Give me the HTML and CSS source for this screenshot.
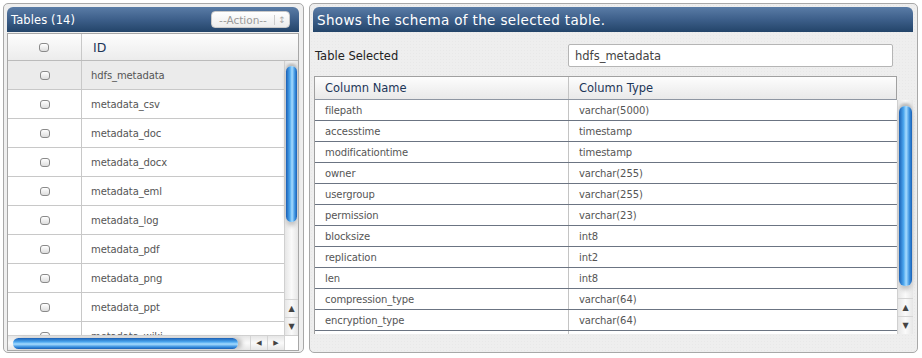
FILE: index.html
```html
<!DOCTYPE html>
<html lang="en">
<head>
  <meta charset="UTF-8">
  <title>Table Schema</title>
  <link rel="stylesheet" href="styles.css">
</head>
<body>
  <div class="page">
    <div class="panel tables-panel">
      <div class="bar">
        <span class="bar-title">Tables (14)</span>
        <div class="action">
          <span class="action-label">--Action--</span>
          <span class="action-arrows">&#8597;</span>
        </div>
      </div>
      <div class="grid">
        <div class="grid-head">
          <div class="cell check"><input type="checkbox" class="cb"></div>
          <div class="cell id">ID</div>
        </div>
        <div class="grid-main">
          <div class="grid-rows">
            <div class="grid-row selected"><div class="cell check"><input type="checkbox" class="cb"></div><div class="cell name">hdfs_metadata</div></div>
            <div class="grid-row"><div class="cell check"><input type="checkbox" class="cb"></div><div class="cell name">metadata_csv</div></div>
            <div class="grid-row"><div class="cell check"><input type="checkbox" class="cb"></div><div class="cell name">metadata_doc</div></div>
            <div class="grid-row"><div class="cell check"><input type="checkbox" class="cb"></div><div class="cell name">metadata_docx</div></div>
            <div class="grid-row"><div class="cell check"><input type="checkbox" class="cb"></div><div class="cell name">metadata_eml</div></div>
            <div class="grid-row"><div class="cell check"><input type="checkbox" class="cb"></div><div class="cell name">metadata_log</div></div>
            <div class="grid-row"><div class="cell check"><input type="checkbox" class="cb"></div><div class="cell name">metadata_pdf</div></div>
            <div class="grid-row"><div class="cell check"><input type="checkbox" class="cb"></div><div class="cell name">metadata_png</div></div>
            <div class="grid-row"><div class="cell check"><input type="checkbox" class="cb"></div><div class="cell name">metadata_ppt</div></div>
            <div class="grid-row"><div class="cell check"><input type="checkbox" class="cb"></div><div class="cell name">metadata_wiki</div></div>
          </div>
          <div class="vscroll">
            <div class="vthumb"></div>
            <div class="vtrack"></div>
            <div class="arrow">&#9650;</div>
            <div class="arrow">&#9660;</div>
          </div>
        </div>
        <div class="hscroll">
          <div class="htrack">
            <div class="hthumb"></div>
          </div>
          <div class="harrow">&#9664;</div>
          <div class="harrow">&#9654;</div>
          <div class="corner"></div>
        </div>
      </div>
    </div>

    <div class="panel schema-panel">
      <div class="bar">
        <span class="bar-title wide">Shows the schema of the selected table.</span>
      </div>
      <div class="selected-row">
        <label class="selected-label">Table Selected</label>
        <input class="selected-input" type="text" value="hdfs_metadata">
      </div>
      <div class="schema">
        <div class="schema-head">
          <div class="scell first">Column Name</div>
          <div class="scell">Column Type</div>
        </div>
        <div class="schema-main">
          <div class="schema-rows">
            <div class="srow"><div class="scell first">filepath</div><div class="scell">varchar(5000)</div></div>
            <div class="srow"><div class="scell first">accesstime</div><div class="scell">timestamp</div></div>
            <div class="srow"><div class="scell first">modificationtime</div><div class="scell">timestamp</div></div>
            <div class="srow"><div class="scell first">owner</div><div class="scell">varchar(255)</div></div>
            <div class="srow"><div class="scell first">usergroup</div><div class="scell">varchar(255)</div></div>
            <div class="srow"><div class="scell first">permission</div><div class="scell">varchar(23)</div></div>
            <div class="srow"><div class="scell first">blocksize</div><div class="scell">int8</div></div>
            <div class="srow"><div class="scell first">replication</div><div class="scell">int2</div></div>
            <div class="srow"><div class="scell first">len</div><div class="scell">int8</div></div>
            <div class="srow"><div class="scell first">compression_type</div><div class="scell">varchar(64)</div></div>
            <div class="srow"><div class="scell first">encryption_type</div><div class="scell">varchar(64)</div></div>
            <div class="srow"><div class="scell first">&nbsp;</div><div class="scell">&nbsp;</div></div>
          </div>
          <div class="vscroll wide">
            <div class="vthumb"></div>
            <div class="vtrack"></div>
            <div class="arrow">&#9650;</div>
            <div class="arrow">&#9660;</div>
          </div>
        </div>
      </div>
    </div>
  </div>
</body>
</html>
```

FILE: styles.css
```css
body {
  margin: 0;
  background: #fff;
  font-family: 'DejaVu Sans', 'Liberation Sans', sans-serif;
  color: #444;
}
.page {
  display: flex;
  gap: 5px;
  padding: 3px 4px 0 3px;
}
.panel {
  box-sizing: border-box;
  height: 350px;
  border: 1px solid #a8a8a8;
  border-radius: 5px;
  background: #efefef;
  padding: 3px 4px 0 3px;
}
.tables-panel {
  width: 301px;
}
.schema-panel {
  flex: 1;
  background-color: #eeeeee;
  background-image: radial-gradient(rgba(0,0,0,0.025) 1px, transparent 1px);
  background-size: 3px 3px;
}
.bar {
  height: 25px;
  display: flex;
  align-items: center;
  justify-content: space-between;
  padding: 0 9px 0 4px;
  border-radius: 6px 6px 0 0;
  background: linear-gradient(#5a7ca6, #3d5f8a 50%, #234469);
  color: #fff;
}
.bar-title {
  font-size: 11.5px;
  letter-spacing: 0.1px;
}
.bar-title.wide {
  font-size: 13.5px;
  letter-spacing: 0.35px;
}
.action {
  display: flex;
  align-items: center;
  height: 17px;
  width: 79px;
  box-sizing: border-box;
  border: 1px solid #c9c9c9;
  border-radius: 4px;
  background: linear-gradient(#ffffff, #ececec);
  color: #999;
  font-size: 10.5px;
}
.action-label {
  flex: 1;
  text-align: center;
}
.action-arrows {
  width: 14px;
  border-left: 1px solid #ccc;
  text-align: center;
  font-size: 9px;
  color: #aaa;
}
.grid {
  border: 1px solid #a7a7a7;
  background: #fff;
  margin-top: 1px;
}
.grid-head {
  display: flex;
  height: 26px;
  background: linear-gradient(#fdfdfd, #ececec);
  border-bottom: 1px solid #bbb;
}
.cell {
  display: flex;
  align-items: center;
}
.check {
  width: 73px;
  justify-content: center;
  border-right: 1px solid #c8c8c8;
}
.grid-head .id {
  padding-left: 11px;
  font-size: 12.5px;
  color: #1c3558;
}
.grid-main {
  display: flex;
  height: 274px;
}
.grid-rows {
  flex: 1;
  overflow: hidden;
}
.grid-row {
  display: flex;
  height: 28px;
  border-bottom: 1px solid #c8c8c8;
}
.grid-row.selected {
  background: #ebebeb;
}
.grid-row .name {
  padding-left: 9px;
  font-size: 10px;
  letter-spacing: -0.1px;
  color: #555;
}
.cb {
  appearance: none;
  margin: 0 0 0 1px;
  width: 10px;
  height: 9px;
  border: 1px solid #8a8a8a;
  border-radius: 3px;
  background: linear-gradient(#fff, #ddd);
}
.grid-head .cb {
  margin-left: -2px;
}
.vscroll {
  width: 13px;
  display: flex;
  flex-direction: column;
  align-items: center;
  background: linear-gradient(to right, #e6e6e6, #fafafa 50%, #e6e6e6);
  border-left: 1px solid #d0d0d0;
}
.vscroll.wide {
  width: 15px;
}
.vthumb {
  width: 11px;
  height: 156px;
  margin-top: 5px;
  border-radius: 6px;
  background: linear-gradient(to right, #1a5fb4, #4ba6ee 35%, #a6dcff 55%, #3c92e0 80%, #1a5fb4);
  box-shadow: 0 -3px 3px #bbb, 0 4px 4px #c4c4c4;
}
.vscroll.wide .vthumb {
  width: 13px;
  height: 180px;
  margin-top: 6px;
}
.vtrack {
  flex: 1;
}
.arrow {
  height: 17px;
  width: 100%;
  border-top: 1px solid #d4d4d4;
  font-size: 8px;
  color: #444;
  text-align: center;
  line-height: 17px;
}
.hscroll {
  display: flex;
  height: 14px;
  border-top: 1px solid #d0d0d0;
  background: linear-gradient(#e6e6e6, #fafafa 50%, #e6e6e6);
}
.htrack {
  width: 237px;
  display: flex;
  align-items: center;
  padding-left: 5px;
}
.hthumb {
  width: 225px;
  height: 11px;
  border-radius: 6px;
  background: linear-gradient(#1a5fb4, #4ba6ee 35%, #a6dcff 55%, #3c92e0 80%, #1a5fb4);
  box-shadow: 4px 0 4px #bbb;
}
.harrow {
  width: 16px;
  border-left: 1px solid #d4d4d4;
  font-size: 7px;
  line-height: 14px;
  text-align: center;
  color: #444;
}
.corner {
  flex: 1;
  background: #fff;
  border-left: 1px solid #d4d4d4;
}
.selected-row {
  display: flex;
  align-items: center;
  justify-content: space-between;
  padding: 12px 20px 0 2px;
  height: 23px;
}
.selected-label {
  font-size: 11.5px;
  color: #222;
}
.selected-input {
  box-sizing: border-box;
  width: 325px;
  height: 23px;
  border: 1px solid #b5b5b5;
  border-radius: 2px;
  background: #fff;
  padding: 0 6px;
  font-family: inherit;
  font-size: 11.5px;
  color: #444;
}
.schema {
  margin: 9px 16px 0 1px;
  border-left: 1px solid #a0a0a0;
}
.schema-head {
  display: flex;
  height: 22px;
  background: linear-gradient(#fdfdfd, #e9e9e9);
  border-top: 1px solid #a0a0a0;
  border-right: 1px solid #a0a0a0;
  border-bottom: 1px solid #8e96a2;
}
.schema-head .scell {
  font-size: 11.5px;
  color: #1c3558;
}
.scell {
  display: flex;
  align-items: center;
  flex: 1;
  padding-left: 10px;
}
.scell.first {
  flex: 0 0 243px;
  border-right: 1px solid #c4c4c4;
}
.schema-main {
  display: flex;
  height: 234px;
  margin-right: -16px;
}
.schema-rows {
  flex: 1;
  overflow: hidden;
  background: #fff;
}
.srow {
  display: flex;
  height: 20px;
  border-bottom: 1px solid #6b7482;
}
.srow .scell {
  font-size: 10px;
  letter-spacing: -0.1px;
  color: #555;
}
```
